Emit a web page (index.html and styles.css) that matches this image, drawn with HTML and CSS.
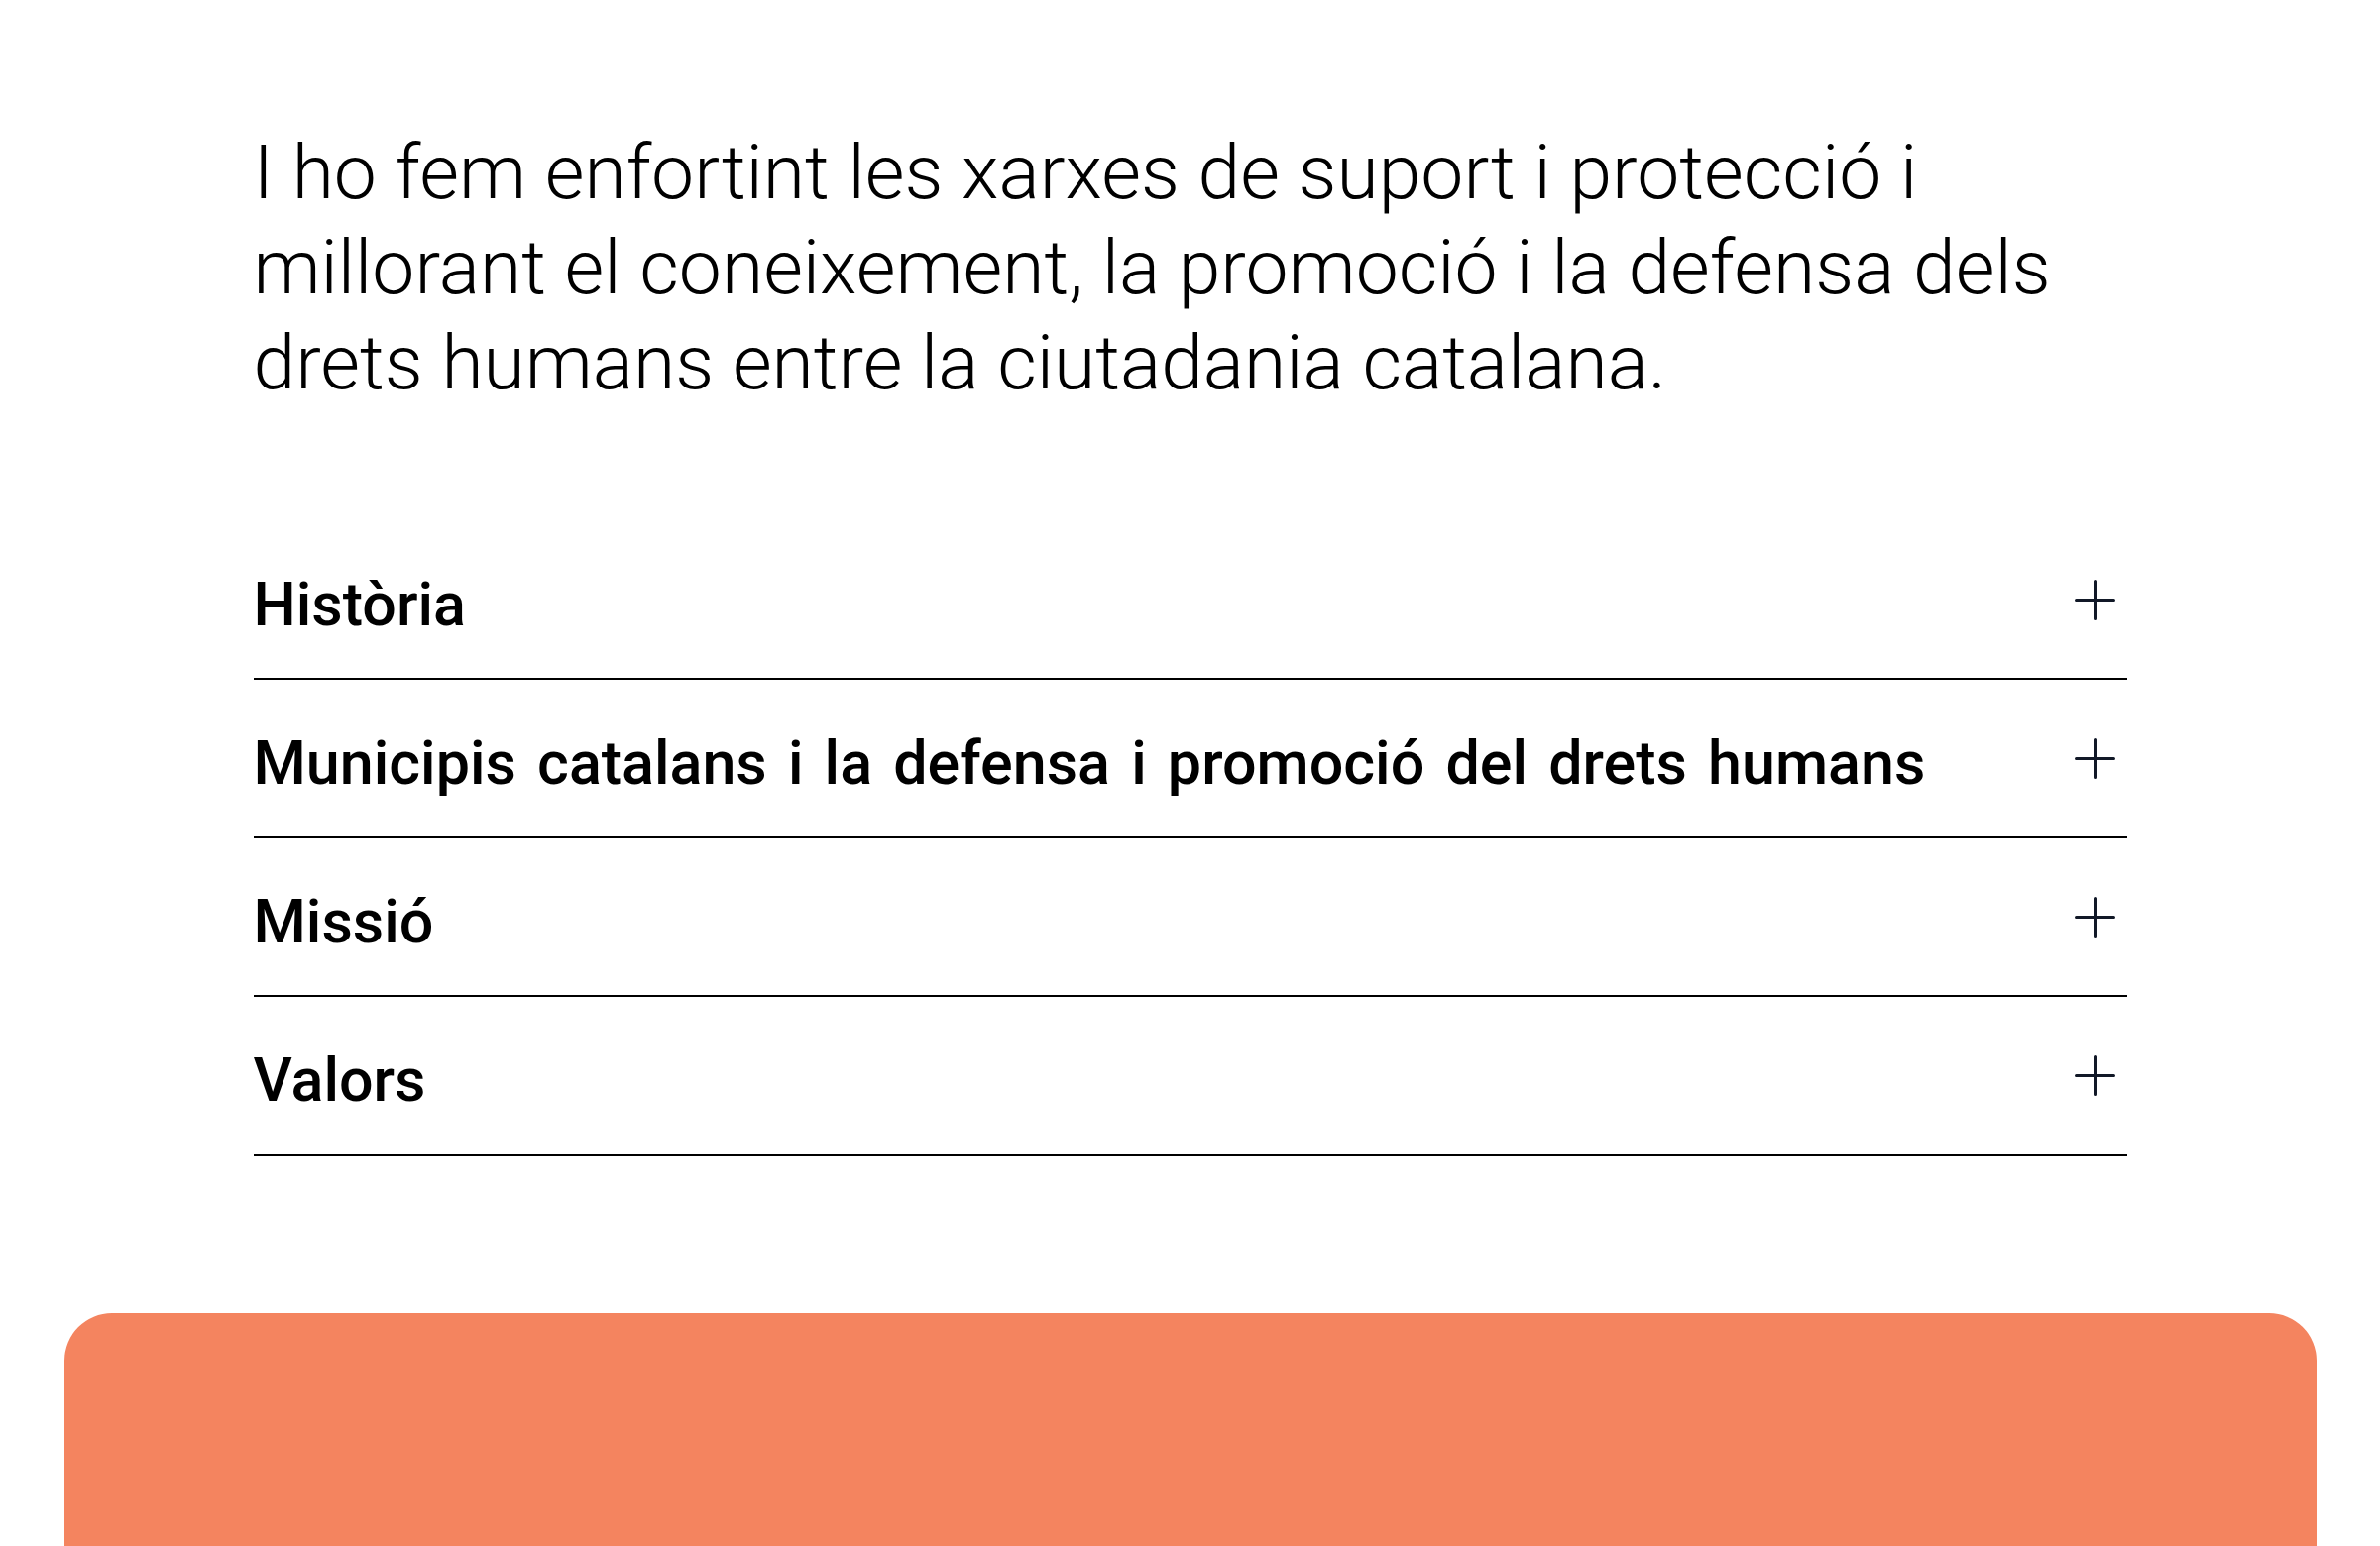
FILE: index.html
```html
<!DOCTYPE html>
<html lang="ca">
<head>
<meta charset="utf-8">
<title>Qui som</title>
<link rel="stylesheet" href="styles.css">
</head>
<body>
<main class="page">
  <section class="content">
    <p class="intro">I ho fem enfortint les xarxes de suport i protecció i millorant el coneixement, la promoció i la defensa dels drets humans entre la ciutadania catalana.</p>
    <div class="accordion">
      <div class="acc-item">
        <h3 class="acc-title">Història</h3>
        <svg class="acc-icon" viewBox="0 0 41 41"><path d="M20.5 1.5V39.5M1.5 20.5H39.5"/></svg>
      </div>
      <div class="acc-item">
        <h3 class="acc-title">Municipis catalans i la defensa i promoció del drets humans</h3>
        <svg class="acc-icon" viewBox="0 0 41 41"><path d="M20.5 1.5V39.5M1.5 20.5H39.5"/></svg>
      </div>
      <div class="acc-item">
        <h3 class="acc-title">Missió</h3>
        <svg class="acc-icon" viewBox="0 0 41 41"><path d="M20.5 1.5V39.5M1.5 20.5H39.5"/></svg>
      </div>
      <div class="acc-item">
        <h3 class="acc-title">Valors</h3>
        <svg class="acc-icon" viewBox="0 0 41 41"><path d="M20.5 1.5V39.5M1.5 20.5H39.5"/></svg>
      </div>
    </div>
  </section>
  <section class="banner"></section>
</main>
</body>
</html>
```
FILE: styles.css
```css
html, body {
  margin: 0;
  padding: 0;
  background: #ffffff;
  overflow: hidden;
}
.page {
  width: 2401px;
  height: 1560px;
  display: flex;
  flex-direction: column;
  align-items: center;
}
.content {
  width: 1890px;
  padding-top: 126px;
}
.intro {
  margin: 0;
  font-family: Roboto, "Liberation Sans", sans-serif;
  font-weight: 300;
  font-size: 76.8px;
  line-height: 96px;
  color: #000;
}
.accordion {
  margin-top: 112px;
}
.acc-item {
  display: flex;
  justify-content: space-between;
  align-items: flex-start;
  padding: 49px 12px 38px 0;
  border-bottom: 2px solid #000;
}
.acc-title {
  margin: 0;
  font-family: Roboto, "Liberation Sans", sans-serif;
  font-weight: 500;
  font-size: 61px;
  line-height: 71px;
  word-spacing: 6px;
  color: #000;
}
.acc-icon {
  width: 41px;
  height: 41px;
  margin-top: 10px;
  flex-shrink: 0;
  fill: none;
  stroke: #111827;
  stroke-width: 3;
  stroke-linecap: round;
}
.banner {
  margin-top: 159px;
  width: 2272px;
  height: 300px;
  flex-shrink: 0;
  background: #f4845f;
  border-radius: 48px 48px 0 0;
}
```
